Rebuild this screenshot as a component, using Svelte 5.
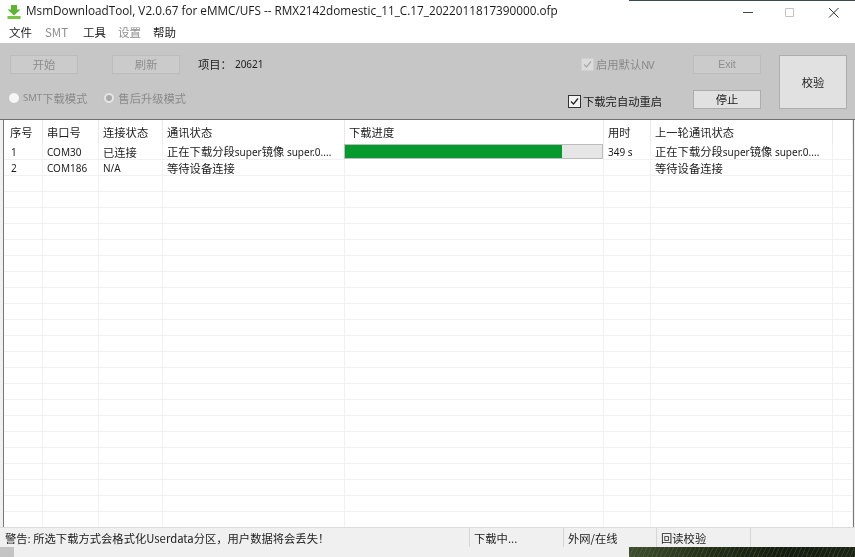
<script>
  const cols = [
    { label: '序号', w: 39 },
    { label: '串口号', w: 56 },
    { label: '连接状态', w: 64 },
    { label: '通讯状态', w: 182 },
    { label: '下载进度', w: 259 },
    { label: '用时', w: 47 },
    { label: '上一轮通讯状态', w: 182 },
    { label: '', w: 20 }
  ];
  const rows = [
    ['1', 'COM30', '已连接', '正在下载分段super镜像 super.0....', null, '349 s', '正在下载分段super镜像 super.0....', ''],
    ['2', 'COM186', 'N/A', '等待设备连接', '', '', '等待设备连接', '']
  ];
  const empties = Array.from({ length: 23 });
  const parts = (s) => s.split(/([A-Za-z0-9./ ]+)/).filter(Boolean).map((p) => ({ p, lat: /^[A-Za-z0-9./ ]/.test(p) }));
</script>

{#snippet mixed(s)}
  {#each parts(s) as x}<span class={x.lat ? 'lat' : ''}>{x.p}</span>{/each}
{/snippet}

<div class="page">
  <div class="window">
    <div class="edge"></div>
    <header class="title">
      <svg class="logo" viewBox="0 0 14 14" width="14" height="14" aria-hidden="true">
        <path d="M4 0h6v4.500h3.500L7 10.500 0.500 4.500H4z" fill="#5cb531" />
        <path d="M0.500 11h13v3h-13z" fill="#78c445" />
      </svg>
      <span class="title-text">MsmDownloadTool, V2.0.67 for eMMC/UFS -- RMX2142domestic_11_C.17_2022011817390000.ofp</span>
      <div class="caption">
        <svg viewBox="0 0 44 20" width="44" height="20" aria-hidden="true"><path d="M20 12.500h10" stroke="#444" stroke-width="1" /></svg>
        <svg viewBox="0 0 44 20" width="44" height="20" aria-hidden="true"><path d="M18.500 8.500h8v8h-8z" fill="none" stroke="#c4c4c4" /></svg>
        <svg viewBox="0 0 44 20" width="44" height="20" aria-hidden="true"><path d="M18 8l9.500 9.500M27.500 8L18 17.500" stroke="#333" stroke-width="1" fill="none" /></svg>
      </div>
    </header>

    <nav class="menu">
      <span>文件</span><span class="off smt-menu">SMT</span><span>工具</span><span class="off set">设置</span><span>帮助</span>
    </nav>

    <section class="toolbar">
      <div class="left">
        <div class="line">
          <button class="btn" disabled>开始</button>
          <button class="btn second" disabled>刷新</button>
          <span class="project">项目：</span><span class="project-no">20621</span>
        </div>
        <div class="line radios">
          <label class="radio"><i class="dot"></i><span class="smt">SMT</span><span>下载模式</span></label>
          <label class="radio second-radio"><i class="dot on"></i>售后升级模式</label>
        </div>
      </div>
      <div class="right">
        <div class="checks">
          <label class="check off"><svg viewBox="0 0 13 13" width="13" height="13" aria-hidden="true"><rect x="0.500" y="0.500" width="12" height="12" fill="#dcdcdc" stroke="#cfcfcf" /><path d="M3 6.500l2.500 2.500L10 3.500" fill="none" stroke="#a8a8a8" stroke-width="1.200" /></svg><span>启用默认<span class="nv">NV</span></span></label>
          <label class="check"><svg viewBox="0 0 13 13" width="13" height="13" aria-hidden="true"><rect x="0.500" y="0.500" width="12" height="12" fill="#f2f2f2" stroke="#333" /><path d="M3 6.500l2.500 2.500L10 3.500" fill="none" stroke="#222" stroke-width="1.200" /></svg>下载完自动重启</label>
        </div>
        <div class="stack">
          <button class="btn exit" disabled>Exit</button>
          <button class="btn stop">停止</button>
        </div>
        <button class="btn verify">校验</button>
      </div>
    </section>

    <main class="table-wrap">
      <div class="table-box">
        <table>
          <colgroup>
            {#each cols as c}<col style="width:{c.w}px" />{/each}
          </colgroup>
          <thead>
            <tr>{#each cols as c}<th>{c.label}</th>{/each}</tr>
          </thead>
          <tbody>
            {#each rows as r}
              <tr>
                {#each r as cell}
                  {#if cell === null}
                    <td class="prog"><div class="track"><div class="fill" style="width:84.500%"></div></div></td>
                  {:else}
                    <td>{@render mixed(cell)}</td>
                  {/if}
                {/each}
              </tr>
            {/each}
            {#each empties as _}
              <tr>{#each cols as c}<td></td>{/each}</tr>
            {/each}
          </tbody>
        </table>
      </div>
    </main>

    <footer class="status">
      <span class="s1">警告: 所选下载方式会格式化Userdata分区，用户数据将会丢失！</span>
      <span class="s2">下载中...</span>
      <span class="s3">外网/在线</span>
      <span class="s4">回读校验</span>
      <span class="s5"></span>
    </footer>
  </div>
  <div class="desk">
    <div class="desk-shade"></div>
    <div class="desk-img"></div>
  </div>
</div>

<style>
  :global(body) { margin: 0; background: #f1f1f1; }
  .page {
    width: 855px; height: 557px; overflow: hidden; display: flex; flex-direction: column;
    font-family: "Noto Sans CJK SC", "Liberation Sans", sans-serif; color: #1c1c1c;
    font-size: 11.300px; filter: blur(0.300px);
  }
  .window { height: 547px; display: flex; flex-direction: column; background: #fff; flex: none; position: relative; }
  .edge { position: absolute; top: 0; left: 629px; right: 0; height: 1px; background: #3c4a52; }
  .title { height: 22px; display: flex; align-items: center; padding-left: 7px; flex: none; position: relative; }
  .logo { margin-right: 5px; margin-top: 2px; }
  .title-text { font-family: "Open Sans", sans-serif; font-size: 11.750px; color: #1a1a1a; white-space: nowrap; position: relative; top: -1px; }
  .caption { margin-left: auto; display: flex; position: relative; top: -1px; }
  .menu { height: 21px; display: flex; align-items: center; padding-left: 9px; gap: 13px; flex: none; font-size: 11.500px; }
  .menu span { line-height: 21px; }
  .menu .off { color: #8e8e8e; }
  .menu .smt-menu { margin-right: 2px; }
  .menu .set { margin: 0 -1px; }

  .toolbar {
    height: 77px; flex: none; background: #c6c6c6; display: flex; justify-content: space-between;
    border-bottom: 1px solid #707070; box-sizing: border-box;
  }
  .left { padding: 12px 0 0 10px; display: flex; flex-direction: column; gap: 14px; }
  .line { display: flex; align-items: center; }
  .btn {
    font: inherit; font-size: 11.300px; padding: 0; border: 1px solid #bcbcbc; background: #cbcbcb; color: #8d8d8d;
    height: 19px; width: 68px; box-sizing: border-box; line-height: 15px;
  }
  .second { margin-left: 34px; }
  .project { margin-left: 18px; position: relative; top: -1px; }
  .project-no { margin-left: 3px; font-family: "Noto Sans", sans-serif; font-size: 10px; position: relative; top: -1px; }
  .radios { margin-left: -2px; }
  .radio { display: flex; align-items: center; color: #8a8a8a; line-height: 20px; white-space: nowrap; }
  .smt { font-family: "Noto Sans", sans-serif; font-size: 9.500px; }
  .second-radio { margin-left: 16px; }
  .dot { width: 12px; height: 12px; border-radius: 50%; background: #f6f6f6; border: 1px solid #c2c2c2; box-sizing: border-box; margin-right: 3px; flex: none; position: relative; }
  .dot.on { background: #e6e6e6; }
  .dot.on::after { content: ""; position: absolute; inset: 2px; border-radius: 50%; background: #a9a9a9; }

  .right { display: flex; padding: 12px 8px 0 0; align-items: flex-start; }
  .checks { display: flex; flex-direction: column; align-items: flex-start; width: 95px; margin-right: 30px; gap: 18px; }
  .check { display: flex; align-items: center; gap: 2px; white-space: nowrap; line-height: 18px; }
  .check.off { color: #8a8a8a; margin-left: 13px; }
  .nv { font-family: "Noto Sans", sans-serif; font-size: 10.500px; letter-spacing: -1px; }
  .stack { display: flex; flex-direction: column; gap: 16px; width: 68px; }
  .exit { font-family: "Liberation Sans", sans-serif; font-size: 10.500px; }
  .stop { background: #e1e1e1; border-color: #adadad; color: #1c1c1c; }
  .verify { height: 54px; margin-left: 18px; background: #e1e1e1; border-color: #adadad; color: #1c1c1c; }

  .table-wrap { height: 407px; flex: none; overflow: hidden; background: #f0f0f0; padding: 0 1px 0 3px; box-sizing: border-box; }
  .table-box { height: 100%; overflow: hidden; background: #fff; border-left: 1px solid #777; border-right: 1px solid #777; }
  table { border-collapse: separate; border-spacing: 0; table-layout: fixed; width: 849px; }
  th {
    height: 24px; padding: 0 0 0 4px; text-align: left; font-weight: 400; border-right: 1px solid #e9e9e9;
    font-size: 11.300px; box-sizing: border-box;
  }
  th:first-child { padding-left: 6px; }
  td {
    height: 16px; padding: 0 0 0 4px; border-right: 1px solid #f1f1f1; border-bottom: 1px solid #f1f1f1; box-sizing: border-box;
    font-size: 11.300px; line-height: 14px; white-space: nowrap; overflow: hidden;
  }
  td:first-child { padding-left: 7px; }
  .lat { font-family: "Noto Sans", sans-serif; font-size: 10px; }
  td.prog { padding: 0; border-bottom: none; vertical-align: top; overflow: visible; }
  .track { height: 15px; width: 259px; margin-left: -1px; background: #e6e6e6; border: 1px solid #bcbcbc; box-sizing: border-box; }
  .fill { height: 100%; background: #069a2e; }

  .status {
    height: 20px; flex: none; display: flex; background: #f0f0f0; align-items: center; font-size: 11.300px;
    border-top: 1px solid #dcdcdc; box-sizing: border-box;
  }
  .status span { height: 100%; display: flex; align-items: center; padding-left: 4px; box-sizing: border-box; border-right: 1px solid #d6d6d6; white-space: nowrap; }
  .s1 { width: 470px; padding-left: 5px !important; }
  .s2 { width: 94px; }
  .s3 { width: 93px; }
  .s4 { width: 94px; }
  .s5 { flex: 1; border-right: none !important; }

  .desk { flex: 1; background: #f0f0f0; display: flex; justify-content: space-between; }
  .desk-shade { width: 14px; background: #c4c4c4; }
  .desk-img {
    width: 226px;
    background:
      repeating-linear-gradient(115deg, rgba(120, 140, 90, 0.220) 0 1px, transparent 1px 4px),
      linear-gradient(90deg, #3f4e30, #27331c 30%, #141b10 70%, #1c2416);
  }
</style>
